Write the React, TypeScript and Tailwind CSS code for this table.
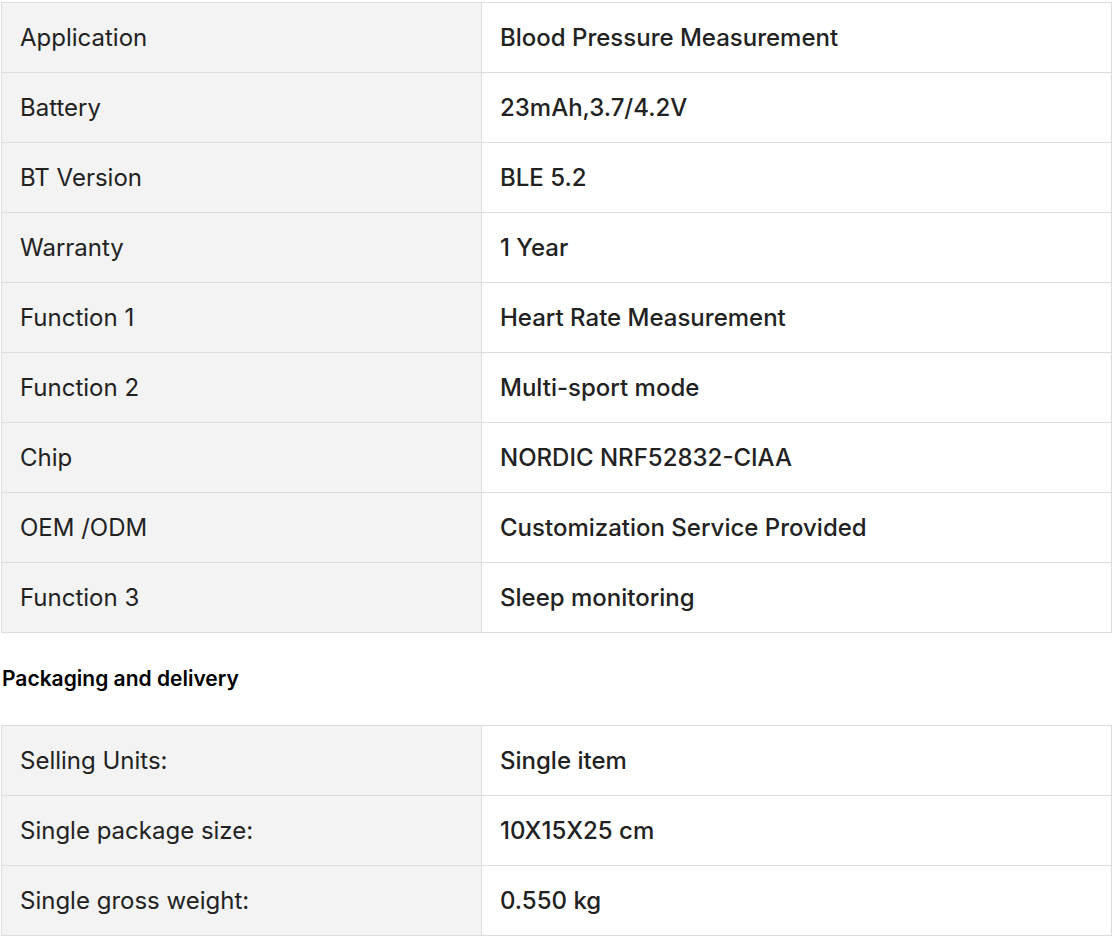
import React from "react";

const specs: [string, string][] = [
  ["Application", "Blood Pressure Measurement"],
  ["Battery", "23mAh,3.7/4.2V"],
  ["BT Version", "BLE 5.2"],
  ["Warranty", "1 Year"],
  ["Function 1", "Heart Rate Measurement"],
  ["Function 2", "Multi-sport mode"],
  ["Chip", "NORDIC NRF52832-CIAA"],
  ["OEM /ODM", "Customization Service Provided"],
  ["Function 3", "Sleep monitoring"],
];

const packaging: [string, string][] = [
  ["Selling Units:", "Single item"],
  ["Single package size:", "10X15X25 cm"],
  ["Single gross weight:", "0.550 kg"],
];

function SpecTable({ rows }: { rows: [string, string][] }) {
  return (
    <table className="w-[1111px] border-collapse table-fixed">
      <tbody>
        {rows.map(([k, v]) => (
          <tr key={k} className="h-[70px]">
            <td className="w-[480px] border border-[#dddddd] bg-[#f3f3f3] pl-[18px] text-[24px] font-normal text-[#222222]">
              {k}
            </td>
            <td className="border border-[#dddddd] bg-white pl-[18px] text-[24px] font-medium text-[#222222]">
              {v}
            </td>
          </tr>
        ))}
      </tbody>
    </table>
  );
}

export default function App() {
  return (
    <div className="min-h-screen bg-white pl-[1px] pt-[2px] font-['Inter',sans-serif]">
      <SpecTable rows={specs} />
      <h3 className="flex h-[92px] items-center pl-[1px] text-[21px] font-semibold text-black">
        Packaging and delivery
      </h3>
      <SpecTable rows={packaging} />
    </div>
  );
}
